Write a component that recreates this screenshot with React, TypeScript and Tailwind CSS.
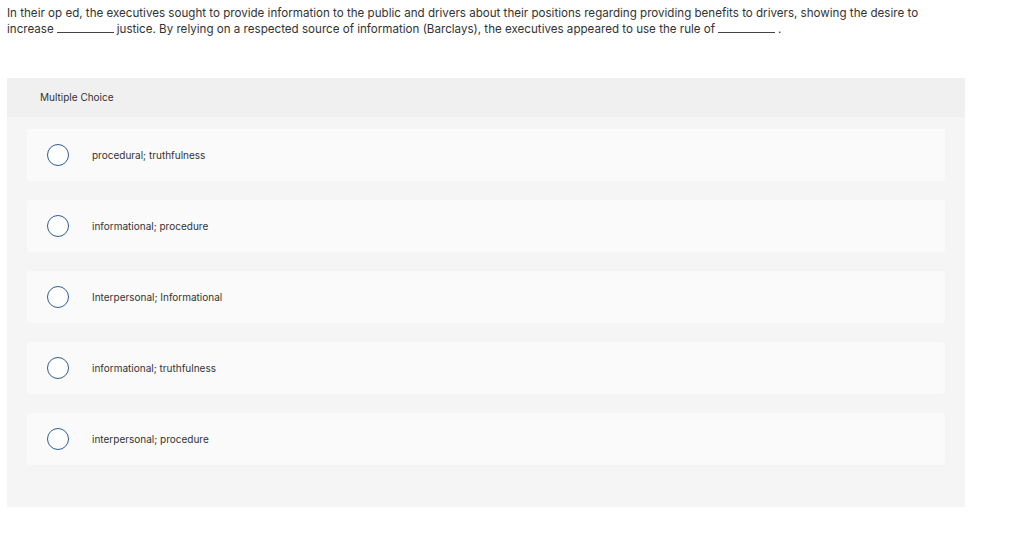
const options = [
  'procedural; truthfulness',
  'informational; procedure',
  'Interpersonal; Informational',
  'informational; truthfulness',
  'interpersonal; procedure',
];

function Blank() {
  return <span className="inline-block w-[57px] border-b border-[#444] mx-[3px]" />;
}

export default function App() {
  return (
    <div className="min-h-[539px] bg-white text-[#333] font-['Inter',sans-serif]">
      <div className="px-[7px] pt-[5px] text-[11.6px] leading-[16px] whitespace-nowrap">
        In their op ed, the executives sought to provide information to the public and drivers about their positions regarding providing benefits to drivers, showing the desire to
        <br />
        increase
        <Blank />
        justice. By relying on a respected source of information (Barclays), the executives appeared to use the rule of
        <Blank />.
      </div>

      <div className="mt-[41px] ml-[7px] w-[958px] bg-[#f5f5f5]">
        <div className="h-[39px] bg-[#f0f0f0] flex items-center pl-[33px] text-[10px]">Multiple Choice</div>
        <div className="px-[20px] pt-[12px] pb-[42px] flex flex-col gap-[19px]">
          {options.map((o) => (
            <div key={o} className="h-[52px] bg-[#fafafa] rounded-[3px] flex items-center pl-[20px]">
              <span className="w-[22px] h-[22px] rounded-full border border-[#2e5e94] bg-white shrink-0" />
              <span className="ml-[23px] text-[10px]">{o}</span>
            </div>
          ))}
        </div>
      </div>
    </div>
  );
}
